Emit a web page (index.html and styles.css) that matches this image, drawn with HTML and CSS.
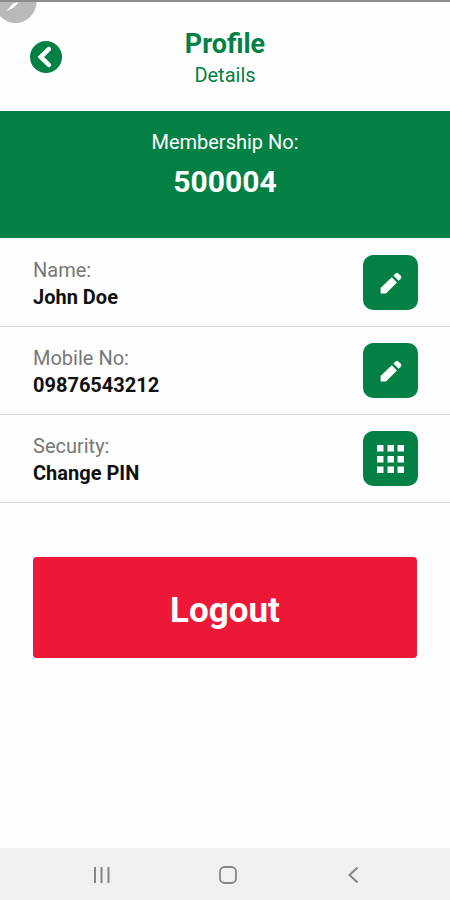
FILE: index.html
```html
<!DOCTYPE html>
<html lang="en">
<head>
    <meta charset="UTF-8">
    <meta name="viewport" content="width=device-width, initial-scale=1.0">
    <title>Profile</title>
    <link rel="stylesheet" href="styles.css">
</head>
<body>
    <svg class="bubble" width="37" height="24" viewBox="0 0 37 24">
        <circle cx="15.5" cy="2" r="21" fill="#b9b9b9"/>
        <path d="M0 0H36V2H0z" fill="#8b8b8b"/>
        <path d="M18.5 1.5 L12.5 4 L10.5 6.5 L6.5 11 L13 8 L17 4.5 Z" fill="#fff"/>
    </svg>
    <header class="header">
        <a href="#" class="back">
            <svg width="32" height="32" viewBox="0 0 32 32">
                <circle cx="16" cy="16" r="16" fill="#038145"/>
                <path d="M18.8 8.2 L10.8 16 L18.8 23.8" fill="none" stroke="#fff" stroke-width="4.6" stroke-linecap="round" stroke-linejoin="miter"/>
            </svg>
        </a>
        <div class="titles">
            <h1>Profile</h1>
            <p>Details</p>
        </div>
    </header>
    <section class="membership">
        <p>Membership No:</p>
        <strong>500004</strong>
    </section>
    <main>
        <div class="row">
            <div class="info">
                <span class="label">Name:</span>
                <span class="value">John Doe</span>
            </div>
            <button class="edit">
                <svg width="24" height="24" viewBox="0 0 24 24" fill="#fff">
                    <path d="M1.6 17 V22.6 H7 L18 11.4 L12.8 6.2 Z"/>
                    <path d="M14.4 4.6 L19.6 9.8 L22 7.4 Q23 6.2 22 5.1 L19.2 2.2 Q18 1.2 16.9 2.2 Z"/>
                </svg>
            </button>
        </div>
        <div class="row">
            <div class="info">
                <span class="label">Mobile No:</span>
                <span class="value">09876543212</span>
            </div>
            <button class="edit">
                <svg width="24" height="24" viewBox="0 0 24 24" fill="#fff">
                    <path d="M1.6 17 V22.6 H7 L18 11.4 L12.8 6.2 Z"/>
                    <path d="M14.4 4.6 L19.6 9.8 L22 7.4 Q23 6.2 22 5.1 L19.2 2.2 Q18 1.2 16.9 2.2 Z"/>
                </svg>
            </button>
        </div>
        <div class="row">
            <div class="info">
                <span class="label">Security:</span>
                <span class="value">Change PIN</span>
            </div>
            <button class="edit">
                <svg width="27" height="28" viewBox="0 0 27 28" fill="#fff">
                    <path d="M0 0h6.5v6.5H0z M10.5 0H17v6.5h-6.5z M20.5 0H27v6.5h-6.5z"/>
                    <path d="M0 11h6.5v6.5H0z M10.5 11H17v6.5h-6.5z M20.5 11H27v6.5h-6.5z"/>
                    <path d="M0 21.5h6.5V28H0z M10.5 21.5H17V28h-6.5z M20.5 21.5H27V28h-6.5z"/>
                </svg>
            </button>
        </div>
        <button class="logout">Logout</button>
    </main>
    <nav class="navbar">
        <svg width="18" height="18" viewBox="0 0 18 18" stroke="#858585" stroke-width="2">
            <path d="M2 1V17 M8.5 1V17 M15.5 1V17"/>
        </svg>
        <svg width="18" height="18" viewBox="0 0 18 18" fill="none" stroke="#858585" stroke-width="1.8">
            <rect x="1" y="1" width="16" height="16" rx="4.5"/>
        </svg>
        <svg width="18" height="18" viewBox="0 0 18 18" fill="none" stroke="#858585" stroke-width="2">
            <path d="M13.5 1.5 L5.5 9 L13.5 16.5"/>
        </svg>
    </nav>
</body>
</html>
```
FILE: styles.css
```css
* {
    box-sizing: border-box;
}
body {
    margin: 0;
    height: 900px;
    display: flex;
    flex-direction: column;
    position: relative;
    border-top: 2px solid #8b8b8b;
    background-color: #fefefe;
    font-family: Roboto, "Liberation Sans", sans-serif;
}
h1, p {
    margin: 0;
    font-weight: normal;
}
button {
    border: none;
    padding: 0;
    font-family: inherit;
    cursor: pointer;
}
svg {
    display: block;
}
.bubble {
    position: absolute;
    top: -2px;
    left: 0;
}
.header {
    height: 109px;
    display: grid;
    grid-template-columns: 75px 1fr 75px;
    padding-top: 25px;
    color: #038145;
    text-align: center;
}
.back {
    padding: 14px 0 0 30px;
}
.titles h1 {
    font-size: 27px;
    line-height: 34px;
    font-weight: bold;
}
.titles p {
    font-size: 20px;
    line-height: 29px;
}
.membership {
    height: 127px;
    padding-top: 18px;
    background-color: #038145;
    color: #fff;
    text-align: center;
}
.membership p {
    font-size: 20px;
    line-height: 26px;
}
.membership strong {
    display: block;
    font-size: 30px;
    line-height: 54px;
}
main {
    flex: 1;
}
.row {
    height: 88px;
    display: flex;
    justify-content: space-between;
    align-items: center;
    padding: 0 32px 0 33px;
    border-bottom: 1px solid #dcdcdc;
}
.row:first-child {
    height: 89px;
    padding-top: 1px;
}
.info {
    padding-top: 2px;
}
.info span {
    display: block;
    font-size: 20px;
    line-height: 27px;
}
.info .label {
    color: #777;
}
.info .value {
    color: #111;
    font-weight: bold;
}
.edit {
    width: 55px;
    height: 55px;
    display: flex;
    justify-content: center;
    align-items: center;
    border-radius: 10px;
    background-color: #038145;
}
.logout {
    display: block;
    width: 384px;
    height: 101px;
    margin: 54px 0 0 33px;
    padding-top: 5px;
    border-radius: 4px;
    background-color: #ed1737;
    color: #fff;
    font-size: 35px;
    font-weight: bold;
}
.navbar {
    height: 52px;
    display: flex;
    justify-content: space-between;
    align-items: center;
    padding: 1px 88px 0 93px;
    background-color: #f0f0f0;
}
```
